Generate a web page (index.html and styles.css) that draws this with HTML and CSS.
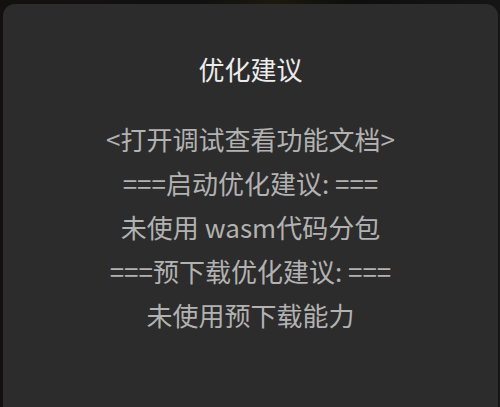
FILE: index.html
```html
<!DOCTYPE html>
<html lang="zh-CN">
<head>
<meta charset="utf-8">
<link rel="stylesheet" href="styles.css">
</head>
<body>
<div class="backdrop">
  <div class="dialog">
    <div class="title">优化建议</div>
    <div class="content">
      <div class="line">&lt;打开调试查看功能文档&gt;</div>
      <div class="line">===启动优化建议: ===</div>
      <div class="line">未使用 wasm代码分包</div>
      <div class="line">===预下载优化建议: ===</div>
      <div class="line">未使用预下载能力</div>
    </div>
  </div>
</div>
</body>
</html>
```
FILE: styles.css
```css
html, body {
  margin: 0;
  padding: 0;
  width: 500px;
  height: 407px;
  overflow: hidden;
  background: #0f0f0f;
}
.backdrop {
  display: flex;
  flex-direction: column;
  height: 407px;
  padding: 4px 2px 0 3px;
  box-sizing: border-box;
  background: linear-gradient(90deg, #141010 0%, #101010 40%, #1a1a0e 55%, #0e0e0e 70%, #151515 100%);
}
.dialog {
  flex: 1;
  background: #2c2c2c;
  border-radius: 12px 12px 0 0;
  display: flex;
  flex-direction: column;
  align-items: center;
  font-family: "Noto Sans CJK SC", "Noto Sans", sans-serif;
}
.title {
  margin-top: 50px;
  font-size: 26px;
  line-height: 30px;
  font-weight: 400;
  color: #ececec;
}
.content {
  margin-top: 33px;
  display: flex;
  flex-direction: column;
  align-items: center;
  color: #b2b2b2;
  font-size: 26px;
  line-height: 44px;
}
.line {
  white-space: pre;
}
```
